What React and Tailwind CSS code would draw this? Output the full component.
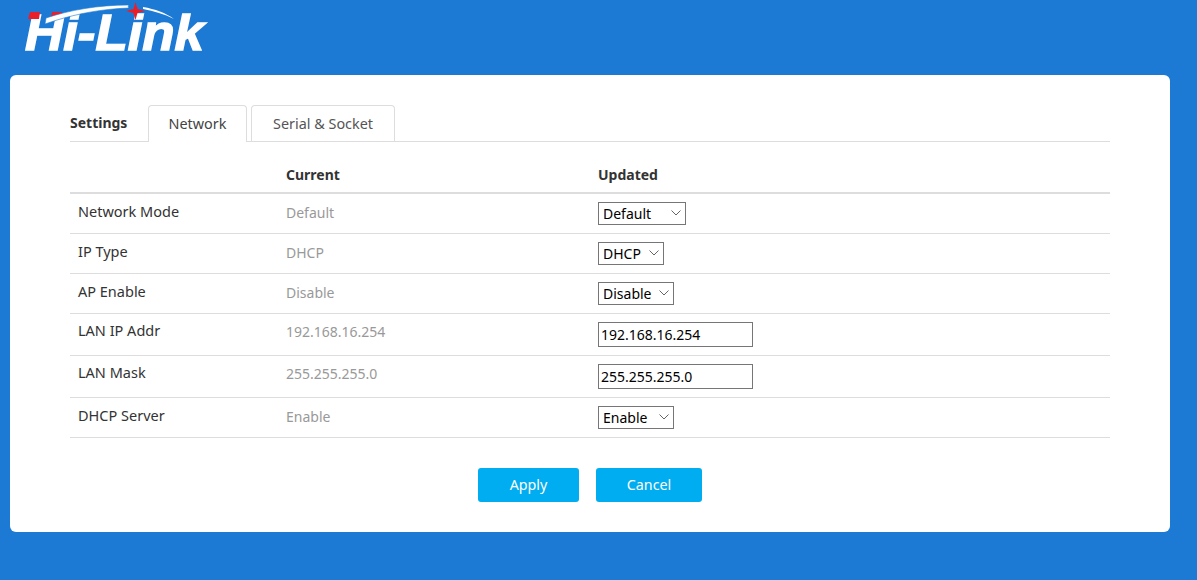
import React from "react";

const font = { fontFamily: '"Noto Sans", "Open Sans", sans-serif' };

function Logo() {
  return (
    <svg width="240" height="70" viewBox="0 0 240 70" className="block">
      <text x="25" y="50" fill="#fff" fontFamily="Liberation Sans" fontWeight="700" fontStyle="italic" fontSize="50" textLength="179" lengthAdjust="spacingAndGlyphs" stroke="#fff" strokeWidth="1.5">Hi-Link</text>
      <path d="M30 12h10l-1 7H28zM52 12h10l-1 5H51z" fill="#e8202c" />
      <path d="M46 18C70 10 98 5 129 5c-1 1-1 2 0 3-28 1-52 6-72 12l-12 4z" fill="#fff" stroke="#1c7ad4" strokeWidth="0.6" />
      <path d="M143 7c12 2 23 6 31 12-10-5-20-8-31-10z" fill="#fff" />
      <path d="M135.500 2l2 7 7.500 2-7.500 2-2 7-2-7-7.500-2 7.500-2z" fill="#ee1c25" />
    </svg>
  );
}

function Select({ value, options, w }) {
  return (
    <div className={`relative ${w} h-[23px]`}>
      <select defaultValue={value} className="appearance-none w-full h-full border border-[#767676] bg-white pl-1 text-[14px] text-black outline-none" style={font}>
        {options.map((o) => <option key={o}>{o}</option>)}
      </select>
      <svg width="10" height="6" viewBox="0 0 10 6" className="absolute right-[5px] top-[8px] pointer-events-none">
        <path d="M.5.5 5 5 9.500.5" fill="none" stroke="#666" strokeWidth="1" />
      </svg>
    </div>
  );
}

function Input({ value }) {
  return (
    <input defaultValue={value} className="w-[155px] h-[25px] border border-[#767676] bg-white px-[2px] text-[14px] text-black outline-none" style={font} />
  );
}

const rows = [
  { label: "Network Mode", cur: "Default", h: "h-[40px]", up: "-mt-[3px]", ctl: <Select value="Default" options={["Default"]} w="w-[88px]" /> },
  { label: "IP Type", cur: "DHCP", h: "h-[40px]", up: "-mt-[3px]", ctl: <Select value="DHCP" options={["DHCP"]} w="w-[66px]" /> },
  { label: "AP Enable", cur: "Disable", h: "h-[40px]", up: "-mt-[3px]", ctl: <Select value="Disable" options={["Disable"]} w="w-[76px]" /> },
  { label: "LAN IP Addr", cur: "192.168.16.254", h: "h-[42px]", up: "-mt-[7px]", ctl: <Input value="192.168.16.254" /> },
  { label: "LAN Mask", cur: "255.255.255.0", h: "h-[42px]", up: "-mt-[7px]", ctl: <Input value="255.255.255.0" /> },
  { label: "DHCP Server", cur: "Enable", h: "h-[40px]", up: "-mt-[3px]", ctl: <Select value="Enable" options={["Enable"]} w="w-[76px]" /> },
];

export default function App() {
  return (
    <div className="h-[580px] bg-[#1c7ad4] overflow-hidden" style={font}>
      <header className="h-[75px]">
        <Logo />
      </header>
      <main className="mx-[10px] w-[1160px] h-[457px] bg-white rounded-[6px] px-[60px] pt-[30px]">
        <div className="flex items-end h-[37px] border-b border-[#dddddd] text-[14.400px]">
          <div className="w-[78px] self-start pt-[8px] font-bold text-[14px] text-[#333] leading-[20px]">Settings</div>
          <div className="h-[37px] w-[99px] -mb-px pb-[1px] border border-b-0 border-[#dddddd] rounded-t-[4px] bg-white flex items-center justify-center text-[#444]">Network</div>
          <div className="ml-[4px] h-[36px] w-[144px] border border-b-0 border-[#dddddd] rounded-t-[4px] flex items-center justify-center text-[#555]">Serial &amp; Socket</div>
        </div>
        <div className="flex items-center h-[52px] border-b-2 border-[#dddddd] text-[14px] font-bold text-[#333] pt-[20px] pb-[6px]">
          <div className="w-[216px]" />
          <div className="w-[312px]">Current</div>
          <div>Updated</div>
        </div>
        {rows.map((r) => (
          <div key={r.label} className={`flex items-center ${r.h} border-b border-[#dddddd] text-[14px]`}>
            <div className={`w-[216px] pl-[8px] text-[14.500px] text-[#333] ${r.up}`}>{r.label}</div>
            <div className={`w-[312px] text-[#999] ${r.up}`}>{r.cur}</div>
            <div>{r.ctl}</div>
          </div>
        ))}
        <div className="flex justify-center gap-[17px] mt-[30px] text-[14.300px] text-white">
          <button className="w-[101px] h-[34px] rounded-[3px] bg-[#00adf0]">Apply</button>
          <button className="w-[106px] h-[34px] rounded-[3px] bg-[#00adf0]">Cancel</button>
        </div>
      </main>
    </div>
  );
}
